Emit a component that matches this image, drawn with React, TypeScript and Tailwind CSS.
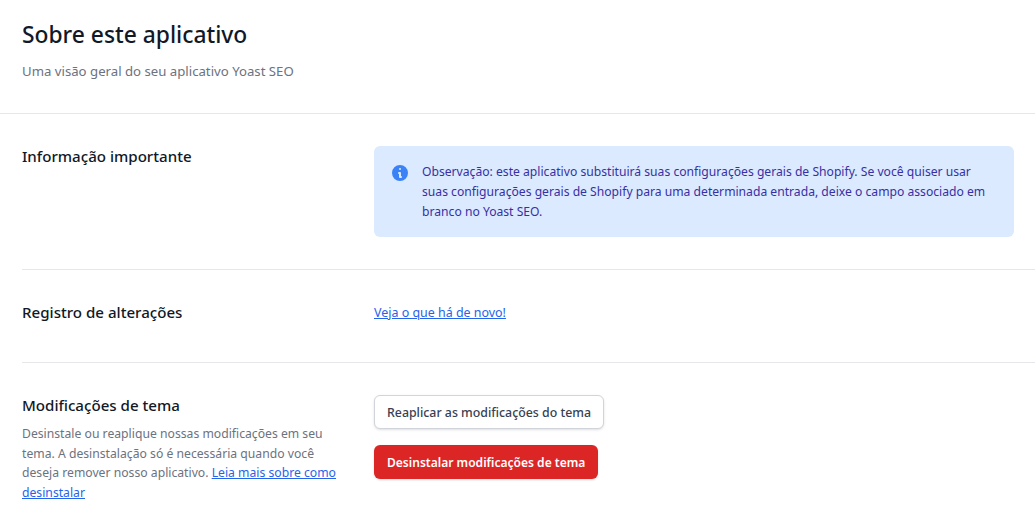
export default function App() {
  return (
    <div className="h-[511px] w-[1035px] overflow-hidden bg-white font-['Noto_Sans',sans-serif] text-[#111827]">
      <header className="h-[114px] border-b border-[#e5e7eb] px-[22px] pt-[18px]">
        <h1 className="text-[22.8px] font-medium leading-[34px]">Sobre este aplicativo</h1>
        <p className="mt-[9px] text-[13.2px] leading-[20px] text-[#6b7280]">Uma visão geral do seu aplicativo Yoast SEO</p>
      </header>
      <div className="pl-[22px]">
        <section className="flex h-[156px] border-b border-[#e5e7eb] pt-[31px]">
          <h2 className="w-[352px] shrink-0 text-[15.1px] font-medium leading-[22px]">Informação importante</h2>
          <div className="mt-px flex h-[91px] w-[640px] gap-[13px] rounded-md bg-[#dbeafe] pl-[17px] pr-[22px] pt-[16px]">
            <svg className="mt-[1px] h-[20px] w-[18px] shrink-0" viewBox="1 0 18 20" fill="#3b82f6">
              <path fillRule="evenodd" clipRule="evenodd" d="M18 10a8 8 0 1 1-16 0 8 8 0 0 1 16 0Zm-7-4a1 1 0 1 1-2 0 1 1 0 0 1 2 0ZM9 9a1 1 0 0 0 0 2v3a1 1 0 0 0 1 1h1a1 1 0 1 0 0-2v-3a1 1 0 0 0-1-1H9Z" />
            </svg>
            <p className="text-[12.15px] leading-[20px] text-[#3730a3]">
              Observação: este aplicativo substituirá suas configurações gerais de Shopify. Se você quiser usar suas configurações gerais de Shopify para uma determinada entrada, deixe o campo associado em branco no Yoast SEO.
            </p>
          </div>
        </section>
        <section className="flex h-[93px] items-start border-b border-[#e5e7eb] pt-[31px]">
          <h2 className="w-[352px] shrink-0 text-[15.1px] font-medium leading-[22px]">Registro de alterações</h2>
          <a href="#" className="mt-px text-[12.45px] leading-[22px] text-[#2563eb] underline">Veja o que há de novo!</a>
        </section>
        <section className="flex pt-[32px]">
          <div className="w-[352px] shrink-0 pr-[26px]">
            <h2 className="-mt-px text-[15.1px] font-medium leading-[22px]">Modificações de tema</h2>
            <p className="mt-[8px] text-[12.2px] leading-[19.5px] text-[#6b7280]">
              Desinstale ou reaplique nossas modificações em seu tema. A desinstalação só é necessária quando você deseja remover nosso aplicativo. <a href="#" className="text-[#2563eb] underline">Leia mais sobre como desinstalar</a>
            </p>
          </div>
          <div className="flex flex-col items-start">
            <button className="h-[34px] rounded-md border border-[#d1d5db] bg-white px-[12px] pt-[2px] text-[12.35px] font-medium text-[#374151] shadow-sm">Reaplicar as modificações do tema</button>
            <button className="mt-[16px] h-[34px] rounded-md bg-[#dc2626] px-[13px] pt-[2px] text-[12.05px] font-semibold text-white shadow-sm">Desinstalar modificações de tema</button>
          </div>
        </section>
      </div>
    </div>
  );
}
